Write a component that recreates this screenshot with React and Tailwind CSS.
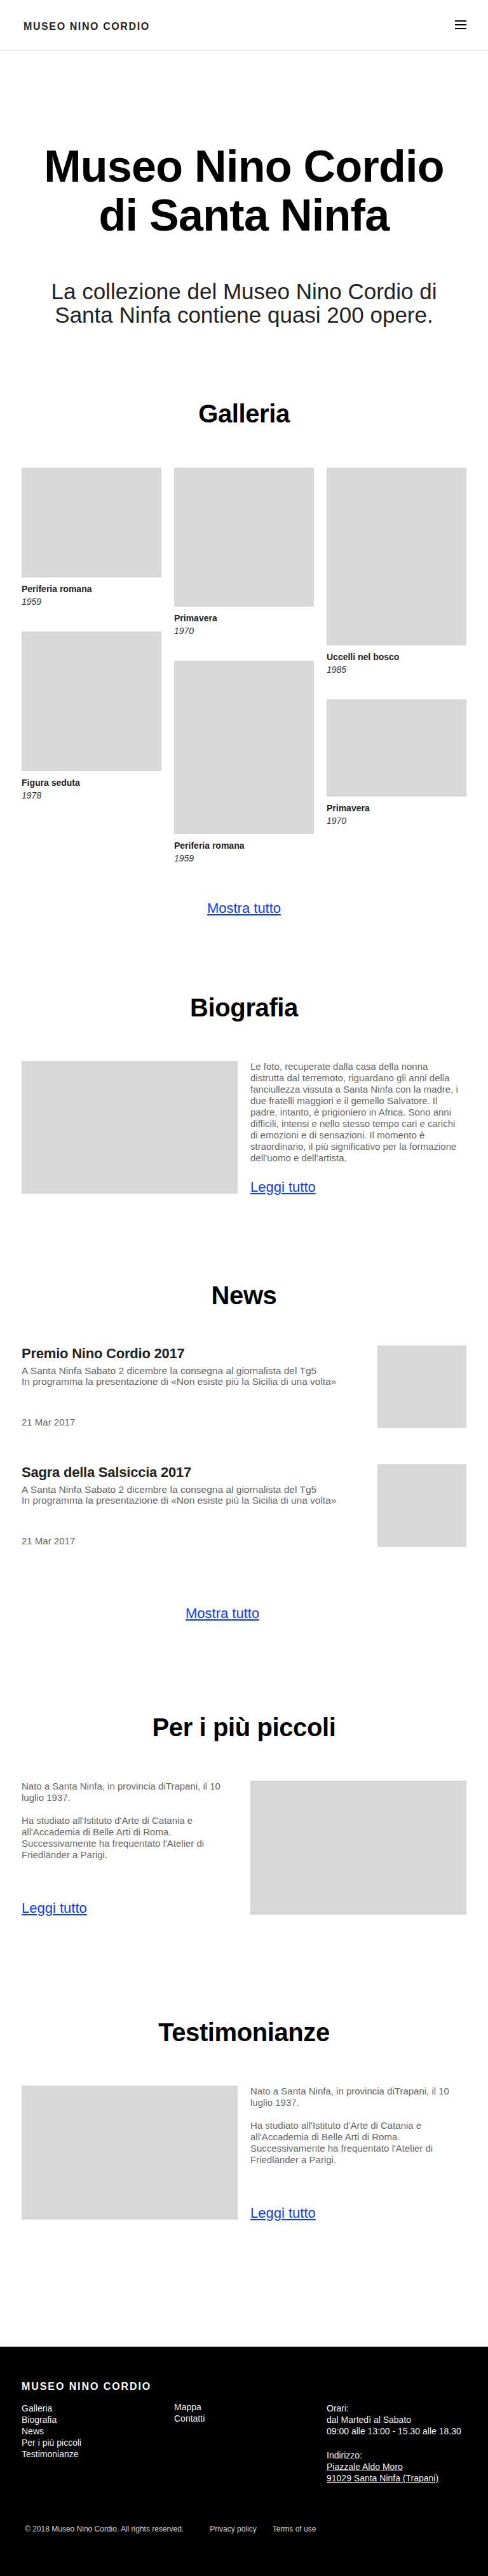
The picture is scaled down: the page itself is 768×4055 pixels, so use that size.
const gallery = [
  [
    { h: 'h-[173px]', title: 'Periferia romana', year: '1959' },
    { h: 'h-[220px]', title: 'Figura seduta', year: '1978' },
  ],
  [
    { h: 'h-[219px]', title: 'Primavera', year: '1970' },
    { h: 'h-[273px]', title: 'Periferia romana', year: '1959' },
  ],
  [
    { h: 'h-[280px]', title: 'Uccelli nel bosco', year: '1985' },
    { h: 'h-[153px]', title: 'Primavera', year: '1970' },
  ],
];

const news = [
  { title: 'Premio Nino Cordio 2017', date: '21 Mar 2017' },
  { title: 'Sagra della Salsiccia 2017', date: '21 Mar 2017' },
];

const bioLines = [
  'Le foto, recuperate dalla casa della nonna',
  'distrutta dal terremoto, riguardano gli anni della',
  'fanciullezza vissuta a Santa Ninfa con la madre, i',
  'due fratelli maggiori e il gemello Salvatore. Il',
  'padre, intanto, è prigioniero in Africa. Sono anni',
  'difficili, intensi e nello stesso tempo cari e carichi',
  'di emozioni e di sensazioni. Il momento è',
  'straordinario, il più significativo per la formazione',
  "dell'uomo e dell'artista.",
];

function Heading({ children, className = '' }) {
  return (
    <h2 className={`text-center text-[40px] leading-[48px] font-bold text-black tracking-[-0.01em] ${className}`}>
      {children}
    </h2>
  );
}

function ReadMore({ children = 'Leggi tutto' }) {
  return (
    <a href="#" className="text-[22px] leading-[24px] text-[#0a3cff] underline underline-offset-2">
      {children}
    </a>
  );
}

function BioText() {
  return (
    <div className="text-[15px] leading-[18px] text-[#666]">
      <p>Nato a Santa Ninfa, in provincia diTrapani, il 10 luglio 1937.</p>
      <p className="mt-[18px]">
        Ha studiato all'Istituto d'Arte di Catania e all'Accademia di Belle Arti di Roma.
        Successivamente ha frequentato l'Atelier di Friedländer a Parigi.
      </p>
    </div>
  );
}

export default function App() {
  return (
    <div className="w-[768px] bg-white font-['Liberation_Sans',Arial,sans-serif] text-[#222]">
      {/* header */}
      <header className="h-[80px] border-b-2 border-[#eeeeee] flex items-center justify-between pl-[37px] pr-[34px]">
        <span className="text-[16px] font-bold tracking-[0.1em] text-[#222] mt-[6px]">MUSEO NINO CORDIO</span>
        <button className="flex flex-col gap-[4px] w-[18px]">
          <span className="h-[2px] bg-black"></span>
          <span className="h-[2px] bg-black"></span>
          <span className="h-[2px] bg-black"></span>
        </button>
      </header>

      {/* hero */}
      <section className="pt-[144px] text-center">
        <h1 className="text-[70px] leading-[77px] font-bold text-black tracking-[-0.01em]">
          Museo Nino Cordio
          <br />
          di Santa Ninfa
        </h1>
        <p className="mt-[62px] text-[35px] leading-[37px] text-[#222]">
          La collezione del Museo Nino Cordio di
          <br />
          Santa Ninfa contiene quasi 200 opere.
        </p>
      </section>

      {/* galleria */}
      <section className="mt-[113px]">
        <Heading>Galleria</Heading>
        <div className="mt-[61px] px-[34px] grid grid-cols-3 gap-5 items-start">
          {gallery.map((col, i) => (
            <div key={i} className="flex flex-col gap-[37px]">
              {col.map((item, j) => (
                <div key={j}>
                  <div className={`${item.h} bg-[#d8d8d8]`}></div>
                  <p className="mt-[8px] text-[14px] leading-[20px] font-bold text-[#222]">{item.title}</p>
                  <p className="text-[14px] leading-[20px] italic text-[#333]">{item.year}</p>
                </div>
              ))}
            </div>
          ))}
        </div>
        <div className="mt-[57px] text-center">
          <ReadMore>Mostra tutto</ReadMore>
        </div>
      </section>

      {/* biografia */}
      <section className="mt-[118px]">
        <Heading>Biografia</Heading>
        <div className="mt-[60px] px-[34px] grid grid-cols-2 gap-5">
          <div className="h-[209px] bg-[#d8d8d8]"></div>
          <div className="flex flex-col justify-between">
            <p className="text-[15px] leading-[18px] text-[#666]">
              {bioLines.map((line, i) => (
                <span key={i} className="block whitespace-nowrap">{line}</span>
              ))}
            </p>
            <div className="-mb-[4px]">
              <ReadMore />
            </div>
          </div>
        </div>
      </section>

      {/* news */}
      <section className="mt-[136px]">
        <Heading>News</Heading>
        <div className="mt-[55px] px-[34px] flex flex-col gap-[57px]">
          {news.map((n, i) => (
            <div key={i} className="flex justify-between gap-5">
              <div className="flex flex-col justify-between">
                <div>
                  <h3 className="text-[22px] leading-[26px] font-bold text-[#222] tracking-[-0.01em]">{n.title}</h3>
                  <p className="mt-[5px] text-[15.5px] leading-[17px] text-[#666]">
                    A Santa Ninfa Sabato 2 dicembre la consegna al giornalista del Tg5
                    <br />
                    In programma la presentazione di «Non esiste più la Sicilia di una volta»
                  </p>
                </div>
                <p className="text-[15px] leading-[18px] text-[#666]">{n.date}</p>
              </div>
              <div className="w-[140px] h-[130px] shrink-0 bg-[#d8d8d8]"></div>
            </div>
          ))}
        </div>
        <div className="mt-[93px] pl-[292px]">
          <ReadMore>Mostra tutto</ReadMore>
        </div>
      </section>

      {/* per i piu piccoli */}
      <section className="mt-[141px]">
        <Heading>Per i più piccoli</Heading>
        <div className="mt-[60px] px-[34px] grid grid-cols-2 gap-5">
          <div className="flex flex-col justify-between">
            <BioText />
            <div className="-mb-[4px]">
              <ReadMore />
            </div>
          </div>
          <div className="h-[211px] bg-[#d8d8d8]"></div>
        </div>
      </section>

      {/* testimonianze */}
      <section className="mt-[161px]">
        <Heading>Testimonianze</Heading>
        <div className="mt-[60px] px-[34px] grid grid-cols-2 gap-5">
          <div className="h-[211px] bg-[#d8d8d8]"></div>
          <div className="flex flex-col justify-between">
            <BioText />
            <div className="-mb-[4px]">
              <ReadMore />
            </div>
          </div>
        </div>
      </section>

      {/* footer */}
      <footer className="mt-[200px] bg-black text-white h-[362px] pt-[53px]">
        <div className="px-[34px]">
          <p className="text-[16px] leading-[20px] font-bold tracking-[0.12em]">MUSEO NINO CORDIO</p>
          <div className="mt-[15px] grid grid-cols-3 gap-5 text-[14px] leading-[18px] text-[#f2f2f2]">
            <ul>
              <li><a href="#">Galleria</a></li>
              <li><a href="#">Biografia</a></li>
              <li><a href="#">News</a></li>
              <li><a href="#">Per i più piccoli</a></li>
              <li><a href="#">Testimonianze</a></li>
            </ul>
            <ul className="-mt-[2px]">
              <li><a href="#">Mappa</a></li>
              <li><a href="#">Contatti</a></li>
            </ul>
            <div>
              <p>Orari:</p>
              <p>dal Martedì al Sabato</p>
              <p className="whitespace-nowrap">09:00 alle 13:00 - 15.30 alle 18.30</p>
              <p className="mt-[20px]">Indirizzo:</p>
              <a href="#" className="underline block">Piazzale Aldo Moro</a>
              <a href="#" className="underline block">91029 Santa Ninfa (Trapani)</a>
            </div>
          </div>
          <div className="mt-[63px] pl-[5px] flex items-center text-[12px] leading-[16px] text-[#d0d0d0]">
            <span>© 2018 Museo Nino Cordio. All rights reserved.</span>
            <a href="#" className="ml-[41px]">Privacy policy</a>
            <a href="#" className="ml-[25px]">Terms of use</a>
          </div>
        </div>
      </footer>
    </div>
  );
}
